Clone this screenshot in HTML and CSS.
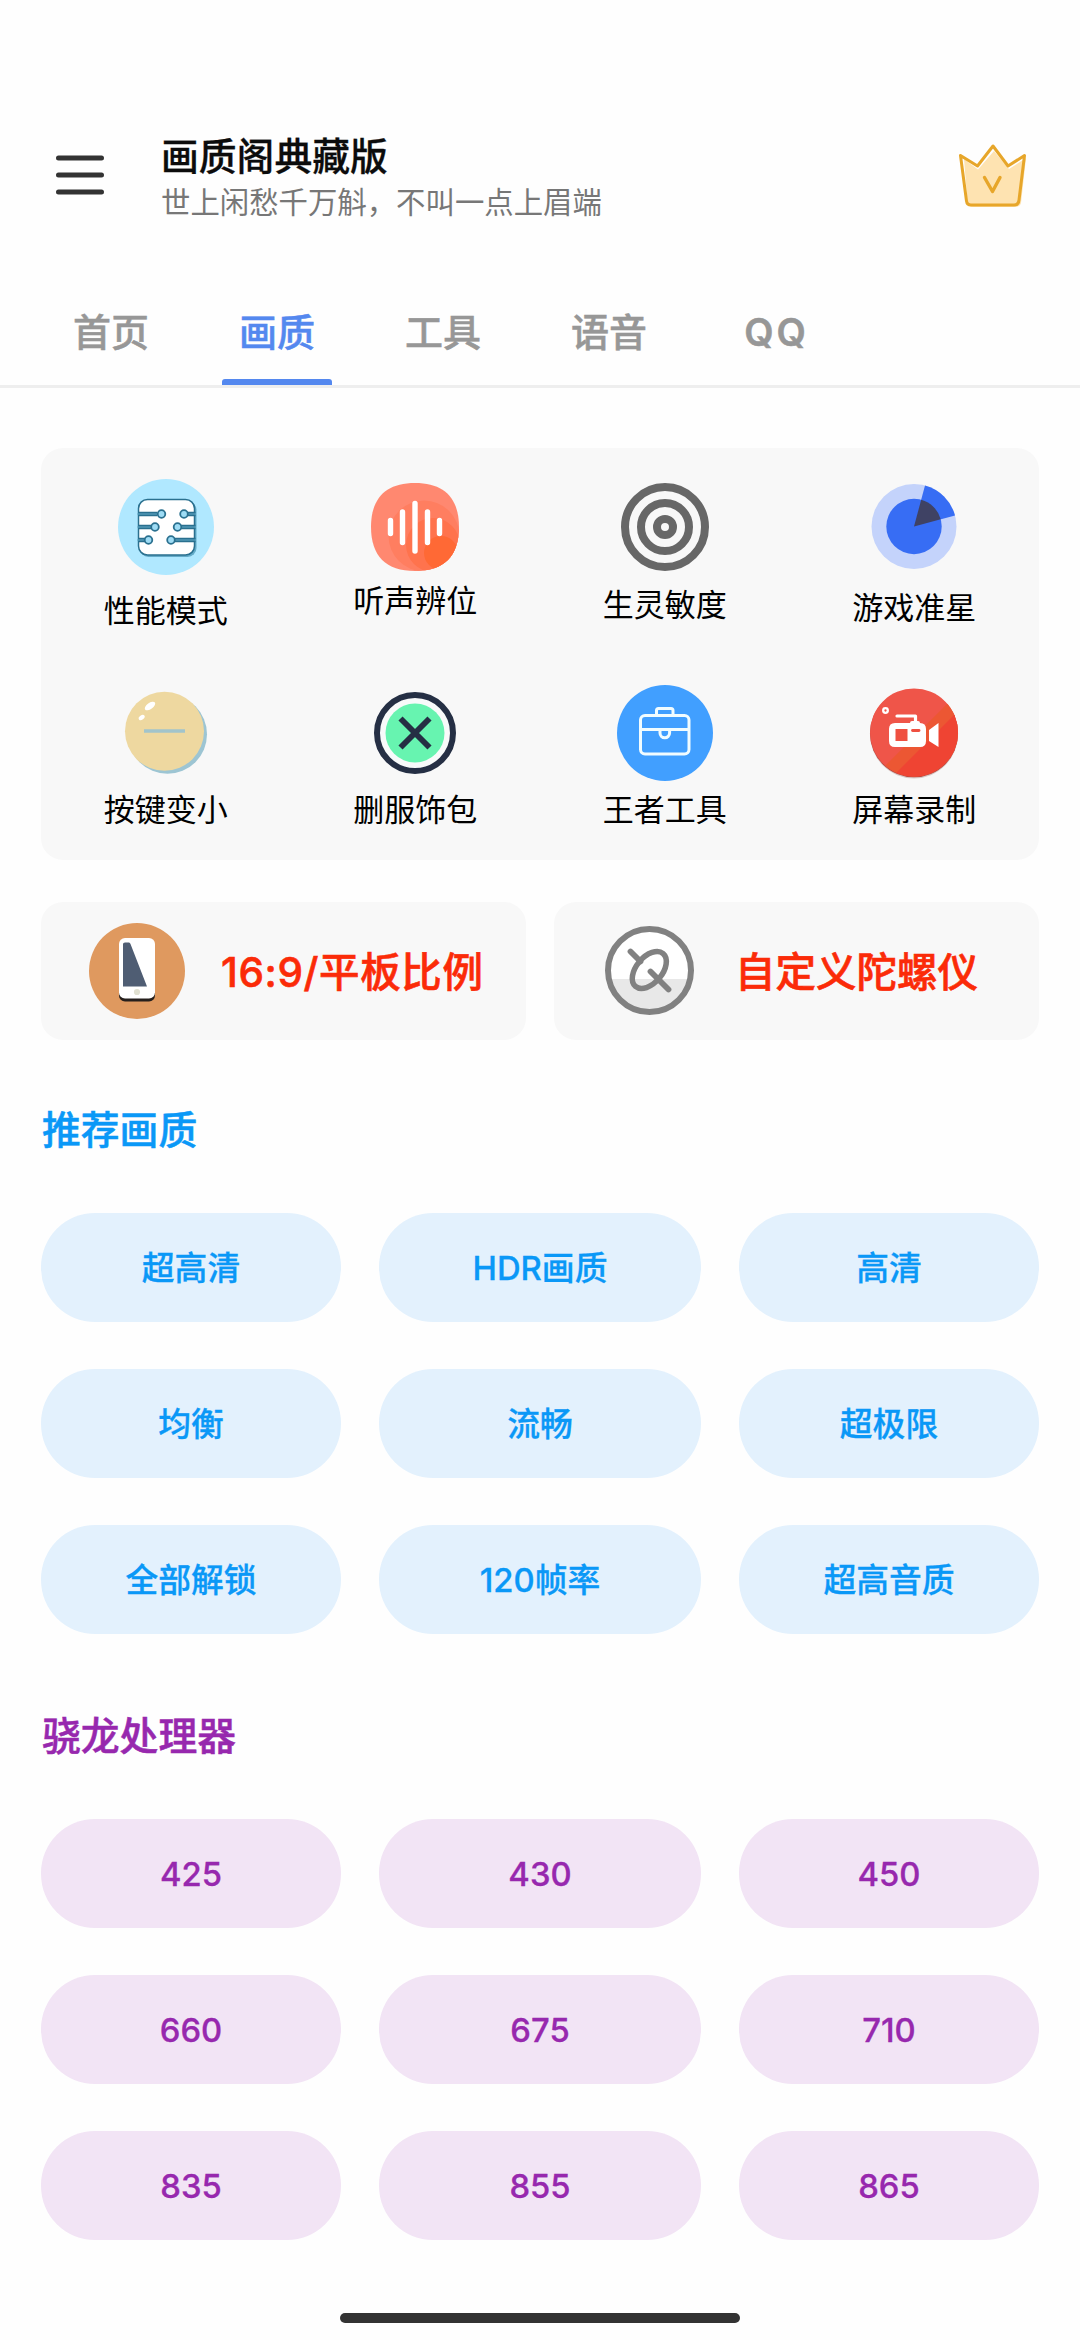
FILE: index.html
```html
<!DOCTYPE html>
<html lang="zh-CN">
<head>
<meta charset="utf-8">
<title>画质阁典藏版</title>
<link rel="stylesheet" href="styles.css">
</head>
<body>
<header class="topbar">
  <svg class="menu" width="48" height="40" viewBox="0 0 48 40"><path d="M2.5 3H45.5M2.5 20H45.5M2.5 37H45.5" stroke="#333" stroke-width="5" stroke-linecap="round"/></svg>
  <div class="titles">
    <h1 class="title">画质阁典藏版</h1>
    <p class="subtitle">世上闲愁千万斛，不叫一点上眉端</p>
  </div>
  <svg class="crown" width="68" height="64" viewBox="0 0 68 64">
    <path d="M5 15L19 25.500L35 7L50 25L67 14L62 59Q61 63 56 63H14Q9 63 8.500 58Z" fill="#fee3b1"/>
    <path d="M1.500 11.500L18.500 22L34 2L49 22L65.500 11.500L60 56Q59.500 61 55 61H12Q8 61 7.500 57Z" fill="none" stroke="#e7a62a" stroke-width="3" stroke-linejoin="round"/>
    <path d="M25.500 33.500L33.500 47.500L41 33.500" fill="none" stroke="#e7a62a" stroke-width="3.400" stroke-linecap="round" stroke-linejoin="round"/>
  </svg>
</header>

<nav class="tabs">
  <a class="tab">首页</a>
  <a class="tab tab-active">画质</a>
  <a class="tab">工具</a>
  <a class="tab">语音</a>
  <a class="tab tab-latin">QQ</a>
</nav>

<main class="content">
  <section class="tools">
    <div class="tool">
      <svg class="tool-icon" width="96" height="96" viewBox="0 0 96 96">
        <circle cx="48" cy="48" r="48" fill="#b0e8ff"/>
        <rect x="21.500" y="22" width="57" height="56" rx="9" fill="#64abc8"/>
        <rect x="20.500" y="20.500" width="56" height="55.500" rx="9" fill="#fff" stroke="#2a708f" stroke-width="1.500"/>
        <g stroke="#2a708f" stroke-width="4.500"><path d="M20 35H39M20 48H33M20 61H27M77.500 35H69M77.500 48H62M77.500 61H56"/></g>
        <g stroke="#64abc8" stroke-width="1"><path d="M19 35H39M19 48H33M19 61H27M78 35H69M78 48H62M78 61H56"/></g>
        <g fill="#9edcf5" stroke="#2a708f" stroke-width="1.800"><circle cx="43.500" cy="35" r="3.800"/><circle cx="37" cy="48" r="3.800"/><circle cx="30.500" cy="61" r="3.800"/><circle cx="66" cy="35" r="3.800"/><circle cx="59.500" cy="48" r="3.800"/><circle cx="53" cy="61" r="3.800"/></g>
      </svg>
      <span class="tool-label label-a">性能模式</span>
    </div>
    <div class="tool">
      <svg class="tool-icon" width="96" height="96" viewBox="0 0 96 96">
        <defs><clipPath id="squircle"><path d="M48 4C77 4 92 19 92 48S77 92 48 92S4 77 4 48S19 4 48 4Z"/></clipPath></defs>
        <g clip-path="url(#squircle)"><rect width="96" height="96" fill="#ff8870"/><circle cx="57" cy="57" r="35.500" fill="#ff7e60"/><circle cx="66" cy="66" r="27" fill="#ff734d"/><circle cx="74" cy="74" r="17" fill="#ff6935"/></g>
        <path d="M23.500 41.500V54.500M35.500 33V63.500M48 24.500V72M60.500 33V63.500M72.500 41.500V54.500" stroke="#fff" stroke-width="5.400" stroke-linecap="round"/>
      </svg>
      <span class="tool-label label-b">听声辨位</span>
    </div>
    <div class="tool">
      <svg class="tool-icon" width="96" height="96" viewBox="0 0 96 96"><g fill="none" stroke="#676767" stroke-width="8"><circle cx="48" cy="48" r="40"/><circle cx="48" cy="48" r="24"/><circle cx="48" cy="48" r="8"/></g></svg>
      <span class="tool-label label-c">生灵敏度</span>
    </div>
    <div class="tool">
      <svg class="tool-icon" width="96" height="96" viewBox="0 0 96 96"><circle cx="48" cy="47.500" r="42.500" fill="#c4d3fb"/><circle cx="48" cy="47.500" r="27.700" fill="#376df4"/><path d="M48 47.500L59 6.500A42.500 42.500 0 0 1 89 36.500Z" fill="#376df4"/><path d="M48 47.500L55.200 20.750A27.700 27.700 0 0 1 74.750 40.300Z" fill="#3f4264"/></svg>
      <span class="tool-label label-d">游戏准星</span>
    </div>
    <div class="tool">
      <svg class="tool-icon" width="96" height="96" viewBox="0 0 96 96"><circle cx="49.500" cy="49.300" r="39.500" fill="#9dc5d3"/><circle cx="46.500" cy="46.200" r="39.500" fill="#eed8a0"/><path d="M26 46H67" stroke="#a2c4cb" stroke-width="3.600"/><ellipse cx="32" cy="21" rx="6" ry="3.100" transform="rotate(-35 32 21)" fill="#fff"/><ellipse cx="23.700" cy="32.500" rx="3.300" ry="2.200" transform="rotate(-35 23.700 32.500)" fill="#fff"/></svg>
      <span class="tool-label">按键变小</span>
    </div>
    <div class="tool">
      <svg class="tool-icon" width="96" height="96" viewBox="0 0 96 96"><circle cx="48" cy="48" r="38" fill="#f8fafa" stroke="#252f44" stroke-width="6"/><circle cx="48" cy="48" r="29.500" fill="#67f4b0"/><path d="M33.500 33.500L62.500 62.500M62.500 33.500L33.500 62.500" stroke="#252f44" stroke-width="5.800"/></svg>
      <span class="tool-label">删服饰包</span>
    </div>
    <div class="tool">
      <svg class="tool-icon" width="96" height="96" viewBox="0 0 96 96"><circle cx="48" cy="48" r="48" fill="#419fff"/><g fill="none" stroke="#f1fcff" stroke-width="3"><rect x="23.500" y="30.500" width="48.500" height="38.500" rx="4.500"/><path d="M39.500 30V25.500Q39.500 23.500 41.500 23.500H54Q56 23.500 56 25.500V30M23.500 44.500H72M43 45.500V48A4.800 4.800 0 0 0 52.600 48V45.500"/></g></svg>
      <span class="tool-label">王者工具</span>
    </div>
    <div class="tool">
      <svg class="tool-icon" width="96" height="96" viewBox="0 0 96 96">
        <defs><clipPath id="disc"><circle cx="48" cy="47.500" r="44"/></clipPath></defs>
        <circle cx="48" cy="49.500" r="44" fill="#d8c9c7"/><circle cx="48" cy="48.300" r="44" fill="#b9433a"/>
        <g clip-path="url(#disc)"><rect width="96" height="96" fill="#ef5549"/><path d="M96 4L8 92H96Z" fill="#ec5733"/><path d="M96 22L20 98H96Z" fill="#ef4433"/></g>
        <circle cx="19.500" cy="25.500" r="2.300" fill="none" stroke="#fff" stroke-width="2.300"/>
        <path d="M31 31H49.500V38" fill="none" stroke="#fff" stroke-width="3.200" stroke-linecap="round" stroke-linejoin="round"/>
        <path d="M29 38H44Q44 36 46 36H52Q54 36 54 38Q60 38 60 44V56Q60 62 54 62H29Q23 62 23 56V44Q23 38 29 38ZM63 45L72.500 38V62L63 56Z" fill="#fff"/>
        <rect x="29.500" y="44" width="12" height="12" fill="#ef5041"/><path d="M46.500 45.500H53" stroke="#ef5041" stroke-width="2.800" stroke-linecap="round"/>
      </svg>
      <span class="tool-label">屏幕录制</span>
    </div>
  </section>

  <section class="features">
    <div class="feature feature-ratio">
      <svg width="96" height="96" viewBox="0 0 96 96"><circle cx="48" cy="48" r="48" fill="#df995f"/><rect x="30" y="19" width="36" height="59.500" rx="6" fill="#251f1c"/><rect x="30" y="15" width="36" height="60.500" rx="6" fill="#fff"/><path d="M34 21Q34 19.500 36 19.500H40Q41 19.500 41.500 21L58 63.500H34Z" fill="#4f5d73"/><circle cx="48" cy="69" r="3.100" fill="#e0e0d1"/></svg>
      <span>16:9/平板比例</span>
    </div>
    <div class="feature feature-gyro">
      <svg width="90" height="90" viewBox="0 0 90 90"><circle cx="44.500" cy="44.500" r="41.500" fill="#fff"/><path d="M4 53H85A41.500 41.500 0 0 1 4 53Z" fill="#e8e8e8"/><g fill="none" stroke="#818181"><circle cx="44.500" cy="44.500" r="41.500" stroke-width="6"/><ellipse cx="44.300" cy="44" rx="21.500" ry="13" transform="rotate(-50 44.300 44)" stroke-width="5.500"/><path d="M25.500 25.500L35.500 35.500M45.500 45.500L63.500 63.500" stroke-width="5.800" stroke-linecap="round"/></g></svg>
      <span>自定义陀螺仪</span>
    </div>
  </section>

  <section class="group group-blue">
    <h2 class="group-title">推荐画质</h2>
    <div class="pills">
      <button class="pill">超高清</button><button class="pill">HDR画质</button><button class="pill">高清</button>
      <button class="pill">均衡</button><button class="pill">流畅</button><button class="pill">超极限</button>
      <button class="pill">全部解锁</button><button class="pill">120帧率</button><button class="pill">超高音质</button>
    </div>
  </section>

  <section class="group group-purple">
    <h2 class="group-title">骁龙处理器</h2>
    <div class="pills">
      <button class="pill">425</button><button class="pill">430</button><button class="pill">450</button>
      <button class="pill">660</button><button class="pill">675</button><button class="pill">710</button>
      <button class="pill">835</button><button class="pill">855</button><button class="pill">865</button>
    </div>
  </section>
</main>
<div class="home-bar"></div>
</body>
</html>
```
FILE: styles.css
```css
* { box-sizing: border-box; }
body {
  margin: 0;
  width: 1080px;
  height: 2340px;
  overflow: hidden;
  display: flex;
  flex-direction: column;
  background: #fefefe;
  color: #000;
  font-family: Inter, "Noto Sans CJK SC", sans-serif;
}
h1, h2, p { margin: 0; }
svg { display: block; flex: none; }

.topbar {
  height: 280px;
  padding: 131px 53px 0 56px;
  display: flex;
  align-items: flex-start;
}
.menu { margin-top: 24px; }
.titles { margin-left: 57px; flex: 1; }
.title { font-size: 37.800px; line-height: 50px; font-weight: 500; color: #0c0c0c; -webkit-text-stroke: 0.300px; }
.subtitle { font-size: 29.400px; line-height: 40px; margin-top: 2px; color: #777; white-space: nowrap; }
.crown { margin-top: 13px; }

.tabs {
  height: 108px;
  padding-left: 28px;
  display: flex;
  border-bottom: 3px solid #eee;
}
.tab {
  width: 166px;
  height: 105px;
  padding: 24px 0 25px;
  display: flex;
  flex-direction: column;
  align-items: center;
  font-size: 38px;
  line-height: 56px;
  font-weight: 500;
  color: #979797;
  -webkit-text-stroke: 0.500px;
}
.tab-latin { font-weight: 600; letter-spacing: 3px; padding-left: 3px; }
.tab-active { color: #5488ef; padding-bottom: 0; justify-content: space-between; }
.tab-active::after { content: ""; width: 110px; height: 6px; border-radius: 3px 3px 0 0; background: #5488ef; }

.content { padding: 60px 41px 0; flex: 1; }
.tools {
  height: 412px;
  padding-top: 31px;
  border-radius: 22px;
  background: #f8f8f8;
  display: grid;
  grid-template-columns: repeat(4, 1fr);
  grid-template-rows: 206px 1fr;
}
.tool { display: flex; flex-direction: column; align-items: center; }
.tool-label { font-size: 31px; line-height: 40px; margin-top: 9px; }
.label-a { margin-top: 16px; }
.label-b { margin-top: 6px; }
.label-c { margin-top: 10px; }
.label-d { margin-top: 13px; }

.features { display: grid; grid-template-columns: 485px 485px; gap: 28px; margin-top: 42px; }
.feature {
  height: 138px;
  border-radius: 22px;
  background: #f8f8f8;
  display: flex;
  align-items: center;
  font-size: 40.500px;
  line-height: 60px;
  font-weight: 500;
  color: #fb2b08;
  white-space: nowrap;
  -webkit-text-stroke: 0.600px;
}
.feature span { padding-top: 3px; }
.feature-ratio { padding-left: 48px; gap: 36px; letter-spacing: 0.600px; }
.feature-gyro { padding-left: 51px; gap: 40px; }

.group-title { font-size: 38.800px; line-height: 56px; font-weight: 500; padding-left: 1px; -webkit-text-stroke: 0.500px; }
.pills { display: grid; grid-template-columns: 300px 322px 300px; gap: 47px 38px; margin-top: 55px; }
.pill {
  height: 109px;
  border: 0;
  padding: 0;
  border-radius: 54px;
  font: 500 32.800px/48px Inter, "Noto Sans CJK SC", sans-serif;
  -webkit-text-stroke: 0.300px;
}
.group-blue { margin-top: 62px; color: #0a98f7; }
.group-blue .pill { background: #e3f1fd; color: #0a98f7; }
.group-purple { margin-top: 74px; color: #9728ae; }
.group-purple .pill { background: #f2e4f5; color: #9728ae; }

.home-bar { width: 400px; height: 10px; border-radius: 5px; margin: 0 auto 17px; background: #333; flex: none; }
```
